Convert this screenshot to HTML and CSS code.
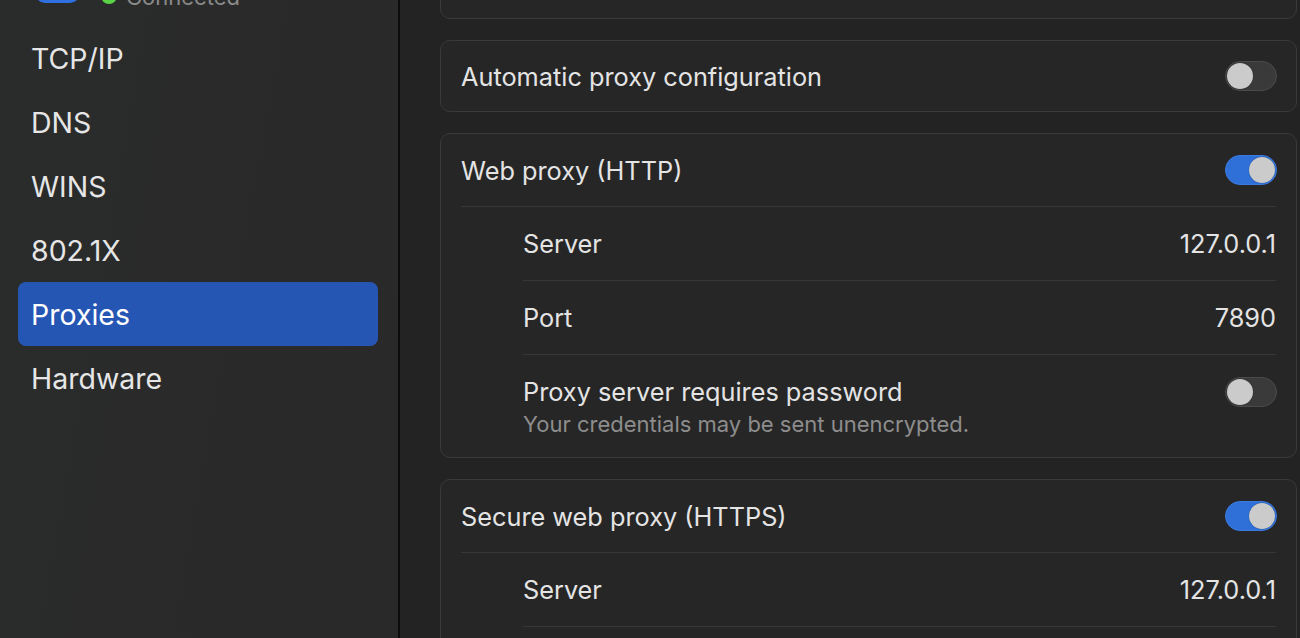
FILE: index.html
```html
<!DOCTYPE html>
<html lang="en">
<head>
<meta charset="utf-8">
<title>Proxies</title>
<link rel="stylesheet" href="styles.css">
</head>
<body>
<div class="window">
  <aside class="sidebar">
    <div class="side-head">
      <div class="net-icon"></div>
      <span class="status-dot"></span>
      <span class="status-text">Connected</span>
    </div>
    <nav class="side-list">
      <div class="side-item">TCP/IP</div>
      <div class="side-item">DNS</div>
      <div class="side-item">WINS</div>
      <div class="side-item">802.1X</div>
      <div class="side-item active">Proxies</div>
      <div class="side-item">Hardware</div>
    </nav>
  </aside>
  <main class="content">
    <section class="card card-top"></section>

    <section class="card">
      <div class="row head last">
        <span class="label">Automatic proxy configuration</span>
        <span class="toggle"><span class="knob"></span></span>
      </div>
    </section>

    <section class="card">
      <div class="row head">
        <span class="label">Web proxy (HTTP)</span>
        <span class="toggle on"><span class="knob"></span></span>
      </div>
      <div class="row sub">
        <span class="label">Server</span>
        <span class="value">127.0.0.1</span>
      </div>
      <div class="row sub">
        <span class="label">Port</span>
        <span class="value">7890</span>
      </div>
      <div class="row sub tall last">
        <div class="stack">
          <span class="label">Proxy server requires password</span>
          <span class="hint">Your credentials may be sent unencrypted.</span>
        </div>
        <span class="toggle"><span class="knob"></span></span>
      </div>
    </section>

    <section class="card">
      <div class="row head">
        <span class="label">Secure web proxy (HTTPS)</span>
        <span class="toggle on"><span class="knob"></span></span>
      </div>
      <div class="row sub">
        <span class="label">Server</span>
        <span class="value">127.0.0.1</span>
      </div>
      <div class="row sub last"></div>
    </section>
  </main>
</div>
</body>
</html>
```

FILE: styles.css
```css
* { box-sizing: border-box; }

html, body {
  margin: 0;
  padding: 0;
  width: 1300px;
  height: 638px;
  overflow: hidden;
  background: #232323;
  font-family: Inter, "Noto Sans", "Liberation Sans", sans-serif;
  -webkit-font-smoothing: antialiased;
}

.window {
  display: flex;
  width: 1300px;
  height: 638px;
  overflow: hidden;
}

.sidebar {
  width: 400px;
  flex: 0 0 400px;
  height: 638px;
  background: linear-gradient(100deg, #2a2c2c 0%, #2a2a2a 45%, #292929 100%);
  border-right: 2px solid #0c0c0c;
  padding: 0 20px 0 18px;
  display: flex;
  flex-direction: column;
}

.side-head {
  display: flex;
  align-items: flex-end;
  height: 60px;
  margin-top: -56px;
  padding-left: 17px;
}

.net-icon {
  width: 45px;
  height: 40px;
  border-radius: 10px;
  background: #2f6fe0;
  margin-bottom: 1px;
}

.status-dot {
  width: 16px;
  height: 16px;
  border-radius: 50%;
  background: #5ad346;
  margin-left: 21px;
}

.status-text {
  font-size: 22px;
  line-height: 22px;
  color: #8a8a8a;
  margin-left: 9px;
  margin-bottom: -4px;
}

.side-list {
  margin-top: 22px;
  display: flex;
  flex-direction: column;
}

.side-item {
  height: 64px;
  display: flex;
  align-items: center;
  padding-left: 13px;
  font-size: 28.5px;
  color: #e6e6e6;
  border-radius: 8px;
}

.side-item.active {
  background: #2656b4;
  color: #ffffff;
}

.content {
  flex: 1;
  padding: 0 3px 0 40px;
  display: flex;
  flex-direction: column;
  gap: 21px;
}

.card {
  background: #262626;
  border: 1px solid #3a3a3a;
  border-radius: 10px;
  padding: 0 20px;
  display: flex;
  flex-direction: column;
  flex: 0 0 auto;
}

.card-top {
  height: 60px;
  margin-top: -41px;
}

.row {
  display: flex;
  align-items: center;
  justify-content: space-between;
  border-bottom: 1px solid #373737;
}

.row.head {
  height: 73px;
}

.row.sub {
  height: 74px;
  margin-left: 62px;
}

.row.last {
  border-bottom: none;
}

.row.head.last {
  height: 70px;
}

.row.sub.tall {
  height: 102px;
  align-items: flex-start;
}

.row.sub.tall .stack {
  padding-top: 20px;
}

.row.sub.tall .toggle {
  margin-top: 22px;
}

.label {
  font-size: 25.3px;
  color: #e4e4e4;
}

.value {
  font-size: 25.3px;
  color: #e4e4e4;
}

.stack {
  display: flex;
  flex-direction: column;
}

.stack .label {
  line-height: 34px;
}

.hint {
  font-size: 22px;
  line-height: 30px;
  color: #8d8d8d;
}

.toggle {
  width: 52px;
  height: 30px;
  border-radius: 15px;
  background: #3a3a3a;
  border: 1px solid #4a4a4a;
  display: flex;
  align-items: center;
  padding: 0 1px;
  margin-right: -1px;
}

.toggle .knob {
  width: 26px;
  height: 26px;
  border-radius: 50%;
  background: #cbcbcb;
  box-shadow: 0 0 1px rgba(0, 0, 0, 0.5);
}

.toggle.on {
  background: #2f70d8;
  border-color: #3b7be0;
  justify-content: flex-end;
}
```
